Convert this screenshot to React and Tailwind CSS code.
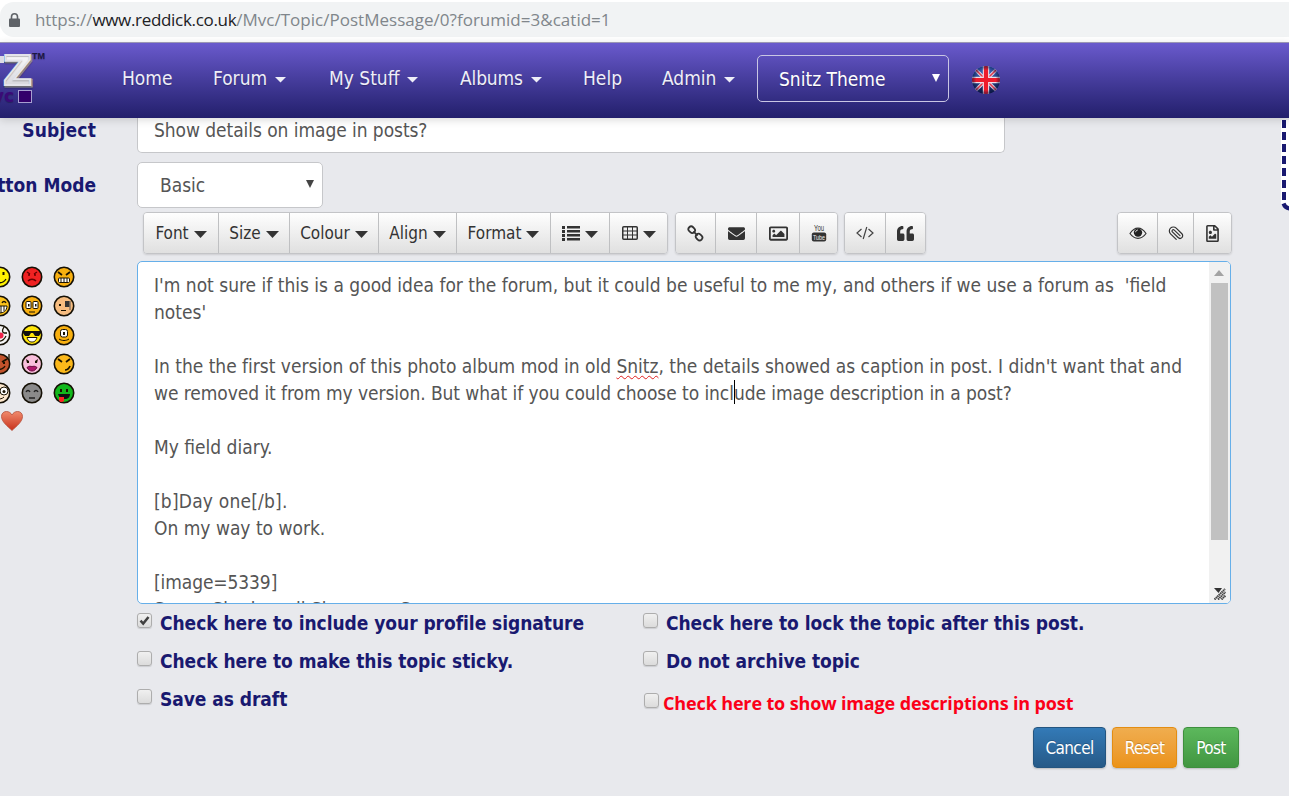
import React from "react";
import { FaEnvelope, FaQuoteLeft, FaRegFileImage, FaRegImage } from "react-icons/fa";
import { Paperclip } from "lucide-react";

function Caret({ className = "" }) {
  return (
    <svg className={className} width="13" height="7" viewBox="0 0 13 7">
      <path d="M0 0h13L6.500 7z" fill="currentColor" />
    </svg>
  );
}

function Logo() {
  return (
    <svg className="shrink-0" width="48" height="64" viewBox="0 0 48 64">
      <defs>
        <linearGradient id="silver" x1="0" y1="0" x2="0" y2="1">
          <stop offset="0" stopColor="#ffffff" />
          <stop offset="1" stopColor="#cfcfd6" />
        </linearGradient>
      </defs>
      <text x="33" y="39" textAnchor="end" fontFamily="DejaVu Sans" fontWeight="700" fontSize="40" fill="#8d8d96" stroke="#8d8d96" strokeWidth="3">Z</text>
      <text x="32" y="38" textAnchor="end" fontFamily="DejaVu Sans" fontWeight="700" fontSize="40" fill="url(#silver)" stroke="#e4e4ea" strokeWidth="2">Z</text>
      <path d="M0 9h4v7H0z" fill="#dcdce4" />
      <text x="32" y="12" fontFamily="Liberation Sans" fontWeight="700" fontSize="9" fill="#1c1740">TM</text>
      <text x="14" y="55" textAnchor="end" fontFamily="DejaVu Sans" fontWeight="700" fontSize="17" fill="#3a0a78">vc</text>
      <rect x="18.500" y="43.500" width="13" height="12" fill="#33006b" stroke="#a79fd0" />
    </svg>
  );
}

function Flag() {
  return (
    <svg width="30" height="30" viewBox="0 0 30 30">
      <defs>
        <clipPath id="disc"><circle cx="15" cy="15" r="14" /></clipPath>
        <linearGradient id="sea" x1="0" y1="0" x2="0" y2="1">
          <stop offset="0" stopColor="#3f74cf" />
          <stop offset="1" stopColor="#0a1440" />
        </linearGradient>
        <radialGradient id="shade">
          <stop offset="0.7" stopColor="#0a1440" stopOpacity="0" />
          <stop offset="1" stopColor="#0a1440" stopOpacity="0.6" />
        </radialGradient>
      </defs>
      <g clipPath="url(#disc)">
        <rect width="30" height="30" fill="url(#sea)" />
        <path d="M3 3l24 24M27 3L3 27" stroke="#dccfe2" strokeWidth="3.600" />
        <path d="M3 3l24 24M27 3L3 27" stroke="#e0384a" strokeWidth="1.500" />
        <path d="M15 0v30M0 15h30" stroke="#f0dfe8" strokeWidth="6.400" />
        <path d="M15 0v30M0 15h30" stroke="#ee1c2c" strokeWidth="4.200" />
        <circle cx="15" cy="15" r="14" fill="url(#shade)" />
      </g>
    </svg>
  );
}

function NavItem({ label, caret, className }) {
  return (
    <div className={"flex shrink-0 items-center gap-[8px] " + className}>
      <span>{label}</span>
      {caret && (
        <svg className="mt-[3px]" width="11" height="6" viewBox="0 0 11 6">
          <path d="M0 0h11L5.500 5.500z" fill="#eeeef8" />
        </svg>
      )}
    </div>
  );
}

function Tool({ label, drop, className, children }) {
  return (
    <div
      className={
        "flex h-full items-center justify-center border-r border-[#bfc0c2] bg-linear-to-b from-[#fefefe] to-[#e0e0e0] text-[#333] last:border-r-0 " +
        className
      }
    >
      {label && <span>{label}</span>}
      {children}
      {drop && <Caret className="ml-[5px] mt-[3px]" />}
    </div>
  );
}

function Group({ className, children }) {
  return (
    <div className={"flex h-[42px] overflow-hidden rounded-[4px] border border-[#c3c4c7] shadow-[0_1px_2px_rgba(0,0,0,0.12)] " + className}>
      {children}
    </div>
  );
}

function ListIcon() {
  return (
    <svg width="18" height="15" viewBox="0 0 18 15" fill="#333">
      <path d="M0 0h3v3H0zM0 4h3v3H0zM0 8h3v3H0zM0 12h3v3H0zM5 0h13v2.500H5zM5 4h13v2.500H5zM5 8h13v2.500H5zM5 12h13v2.500H5z" />
    </svg>
  );
}

function TableIcon() {
  return (
    <svg width="16" height="14" viewBox="0 0 16 14" fill="none" stroke="#333">
      <rect x="0.750" y="0.750" width="14.500" height="12.500" rx="1" strokeWidth="1.500" />
      <path d="M0 5h16M0 9h16M5.500 0v14M10.500 0v14" />
    </svg>
  );
}

function ChainIcon() {
  return (
    <svg width="17" height="17" viewBox="0 0 18 18" fill="none" stroke="#333" strokeWidth="1.900">
      <rect x="-3.700" y="-2.900" width="7.400" height="5.800" rx="2.900" transform="translate(5 5) rotate(45)" />
      <rect x="-3.700" y="-2.900" width="7.400" height="5.800" rx="2.900" transform="translate(12.800 12.800) rotate(45)" />
      <path d="M6.800 6.800l4.400 4.400" />
    </svg>
  );
}

function YouTubeIcon() {
  return (
    <svg width="16" height="18" viewBox="0 0 16 18">
      <text x="8" y="7.300" textAnchor="middle" fontFamily="Liberation Sans" fontSize="9" textLength="10" lengthAdjust="spacingAndGlyphs" fill="#333">You</text>
      <rect x="0.800" y="8.500" width="14.400" height="9" rx="2" fill="#333" />
      <text x="8" y="15.800" textAnchor="middle" fontFamily="Liberation Sans" fontSize="8" textLength="12" lengthAdjust="spacingAndGlyphs" fill="#f4f4f4">Tube</text>
    </svg>
  );
}

function CodeIcon() {
  return (
    <svg width="18" height="14" viewBox="0 0 18 14" fill="none" stroke="#444" strokeWidth="1.200">
      <path d="M5.500 3L1 7l4.500 4M12.500 3L17 7l-4.500 4M10.800 1L7.200 13" />
    </svg>
  );
}

function EyeIcon() {
  return (
    <svg width="18" height="13" viewBox="0 0 18 13">
      <path d="M1 6.500C3.500 2.700 6 1.200 9 1.200s5.500 1.500 8 5.300c-2.500 3.500-5 4.900-8 4.900S3.500 10 1 6.500z" fill="none" stroke="#333" strokeWidth="1.200" />
      <circle cx="9" cy="5.600" r="4.200" fill="#222" />
      <path d="M6.600 5.200c.2-1.300 1-2 2.200-2.200" fill="none" stroke="#eee" strokeWidth="1" />
    </svg>
  );
}

const dark = "#1a1200";
const eyes = <path d="M7 7h2v3H7zM13 7h2v3h-2z" fill={dark} />;
const angry = <path d="M5 6l4 3M17 6l-4 3" stroke={dark} strokeWidth="1.800" fill="none" />;
const smileys = [
  { fill: "#fff200", art: <><path d="M13.500 6h2v3h-2z" fill={dark} /><path d="M5 13c3 5 9 5 12 0" stroke={dark} strokeWidth="1.300" fill="none" /></> },
  { fill: "#f02222", art: <path d="M6 6l3 2M16 6l-3 2M9 9H7M13 9h2M7 15c2-2.500 6-2.500 8 0" stroke="#6a0000" strokeWidth="1.500" fill="none" /> },
  { fill: "#f8b010", art: <>{angry}<rect x="5.500" y="12" width="11" height="4.500" rx="1" fill="#fff" stroke={dark} /><path d="M8 12v5M11 12v5M14 12v5" stroke={dark} /></> },
  { fill: "#fbc21a", art: <><path d="M13 8c1-2 3-2 4 0" stroke={dark} fill="none" strokeWidth="1.300" /><path d="M3 11h15c0 5-4 7-7.500 7z" fill="#fff" stroke={dark} /><path d="M12 11v7M15 11v5" stroke={dark} /></> },
  { fill: "#f8b010", art: <><rect x="5" y="6.500" width="5" height="7" rx="1" fill="#fff" stroke={dark} /><rect x="12" y="6.500" width="5" height="7" rx="1" fill="#fff" stroke={dark} /><path d="M7 9h1.500v2.500H7zM14 9h1.500v2.500H14z" fill={dark} /><path d="M8 17h6" stroke={dark} /></> },
  { fill: "#f6bc80", art: <><path d="M6 9h2v2H6z" fill={dark} /><rect x="12" y="6" width="4.500" height="6" fill="#333" /><path d="M17 6v9" stroke="#555" /><path d="M8 15.500h5" stroke={dark} /></> },
  { fill: "#f4f4f4", art: <><path d="M15 3c-2 3-2 5 0 6h3" stroke={dark} fill="none" strokeWidth="1.300" /><circle cx="11.500" cy="11.500" r="3" fill="#ee2148" /><path d="M8 17c4 1 7-1 9-5" stroke={dark} fill="none" strokeWidth="1.300" /></> },
  { fill: "#ffe60a", art: <><path d="M2 7h18v2l-2 3h-4l-2-3h-2l-2 3H4L2 9z" fill="#111" /><path d="M6 13.500h10c-1 3.500-3 4.500-5 4.500s-4-1-5-4.500z" fill="#fff" stroke={dark} /></> },
  { fill: "#f8b010", art: <><rect x="7.500" y="5.500" width="7" height="7.500" rx="2" fill="#fff" stroke={dark} /><path d="M10 8h2v3h-2z" fill={dark} /><path d="M6 15c3 2 7 2 10 0" stroke={dark} fill="none" /></> },
  { fill: "#c2532c", art: <><path d="M13 9l5-3M14 10h2" stroke={dark} strokeWidth="1.800" /><path d="M9 16c3 1 6-1 7-3M20 1v6" stroke={dark} fill="none" strokeWidth="1.300" /></> },
  { fill: "#f9bfdc", art: <><path d="M5 6l3 2v2H6zM17 6l-3 2v2h2z" fill={dark} /><path d="M6 14.500c2-2 4-1 5-1s3-1 5 1c-1.500 2.500-3 3.500-5 3.500s-3.500-1-5-3.500z" fill="#b0186c" stroke="#6b0b40" /></> },
  { fill: "#fbb81a", art: <>{angry}<path d="M12 17c3 0 4-1.500 5-4" stroke={dark} fill="none" strokeWidth="1.700" /></> },
  { fill: "#fbe6cc", art: <><circle cx="15" cy="9" r="4" fill="#fff" stroke={dark} /><circle cx="15" cy="9.500" r="1.500" fill={dark} /><path d="M8 17c3 0 5 0 7-2" stroke={dark} fill="none" /></> },
  { fill: "#8a8a8a", art: <path d="M5 10c1-2 3-2 4 0M13 10c1-2 3-2 4 0M8 16h6" stroke="#222" fill="none" strokeWidth="1.300" /> },
  { fill: "#12b81c", art: <>{eyes}<path d="M5 12h12c0 3-2 5-5 5s-6-1-7-5z" fill="#111" /><path d="M6 15h5v4c-2 2-5 1-5-1z" fill="#f22" /></> },
];

function Smiley({ fill, art }) {
  return (
    <svg width="22" height="22" viewBox="0 0 22 22">
      <circle cx="11" cy="11" r="9.700" fill={fill} stroke="#151005" strokeWidth="1.600" />
      {art}
    </svg>
  );
}

function Check({ label, on, className = "", labelClass }) {
  return (
    <div className={"flex h-[38px] items-start " + className}>
      <span className="flex size-[15px] shrink-0 items-center justify-center rounded-[3px] border border-[#adadad] bg-linear-to-b from-[#f0f0f0] to-[#dcdcdc] shadow-[0_1px_1px_rgba(0,0,0,0.12)]">
        {on && (
          <svg width="11" height="11" viewBox="0 0 11 11">
            <path d="M1.500 5.700l2.700 2.800L9.500 2" fill="none" stroke="#404040" strokeWidth="2.500" />
          </svg>
        )}
      </span>
      <span className={"whitespace-nowrap " + labelClass}>{label}</span>
    </div>
  );
}

const navyLabel = "ml-[8px] mt-[-3px] text-[19px] leading-[27px] font-bold tracking-[-0.05px] text-[#191970]";

export default function App() {
  return (
    <div className="h-[796px] w-[1289px] overflow-hidden bg-[#e8e9ed] font-['DejaVu_Sans_Condensed','DejaVu_Sans',sans-serif] text-[19px] leading-[27px] text-[#555]">
      <div className="h-[42px] bg-white pt-[2px]">
        <div className="flex h-[35px] items-center rounded-l-[14px] bg-[#f1f3f4] pl-[9px] font-['Open_Sans','Noto_Sans',sans-serif] text-[17px] text-[#80868b]">
          <svg className="mr-[15px]" width="11" height="14" viewBox="0 0 11 14">
            <path d="M2.500 6V3.800a3 3 0 016 0V6" fill="none" stroke="#5f6368" strokeWidth="1.600" />
            <rect x="0" y="5.500" width="11" height="8.500" rx="1" fill="#5f6368" />
          </svg>
          <span className="tracking-[-0.075px]">
            https://<span className="tracking-[-0.32px] text-[#202124]">www.reddick.co.uk</span>/<span className="tracking-[0.02px]">Mvc/Topic/PostMessage/0?forumid=3&amp;catid=1</span>
          </span>
        </div>
      </div>

      <nav className="relative flex h-[76px] border-t border-[#9a96b4] bg-linear-to-b from-[#6a5acd] to-[#231f6c] text-[#eeeef8] shadow-[0_2px_8px_rgba(0,0,0,0.15)] [text-shadow:0_1px_1px_rgba(0,0,0,0.25)]">
        <div className="w-[122px] shrink-0 pt-[4px]"><Logo /></div>
        <div className="flex h-[71px] items-center">
          <NavItem label="Home" className="w-[91px]" />
          <NavItem label="Forum" caret className="w-[116px]" />
          <NavItem label="My Stuff" caret className="w-[131px]" />
          <NavItem label="Albums" caret className="w-[123px] tracking-[-0.15px]" />
          <NavItem label="Help" className="w-[79px]" />
          <NavItem label="Admin" caret className="w-[95px]" />
        </div>
        <div className="mt-[12px] flex h-[47px] w-[192px] shrink-0 items-center justify-between rounded-[5px] border border-[#c9c6e4] pr-[8px] pl-[21px] text-white">
          <span className="mt-[2px]">Snitz Theme</span>
          <svg className="mb-[2px]" width="8" height="8" viewBox="0 0 9 9"><path d="M0 0h9L4.500 9z" fill="#fff" /></svg>
        </div>
        <div className="mt-[22px] ml-[22px]"><Flag /></div>
      </nav>

      <div className="flex h-[678px]">
        <aside className="flex w-[96px] shrink-0 flex-col">
          <div className="mt-[-1px] flex justify-end font-bold tracking-[0.2px] whitespace-nowrap text-[#191970]">Subject</div>
          <div className="mt-[28px] flex justify-end font-bold whitespace-nowrap text-[#191970]">Button Mode</div>
          <div className="mt-[67px] ml-[-11px] grid w-[86px] grid-cols-3 gap-x-[10px] gap-y-[7px]">
            {smileys.map((s, i) => <Smiley key={i} {...s} />)}
          </div>
          <svg className="mt-[6px]" width="24" height="22" viewBox="0 0 24 22">
            <defs>
              <linearGradient id="heart" x1="0" y1="0" x2="0" y2="1">
                <stop offset="0" stopColor="#f08a6c" />
                <stop offset="1" stopColor="#c8311c" />
              </linearGradient>
            </defs>
            <path d="M12 20.500C8 16.500 1.500 12 1.500 6.500 1.500 3 4 1.500 6.500 1.500S11 3 12 5c1-2 3-3.500 5.500-3.500s5 1.500 5 5c0 5.500-6.500 10-10.500 14z" fill="url(#heart)" stroke="#b5503c" strokeWidth="0.800" />
          </svg>
        </aside>

        <main className="ml-[41px] flex w-[1102px] shrink-0 flex-col">
          <div className="h-[35px] w-[868px] rounded-b-[5px] border border-t-0 border-[#c6c7ca] bg-white pl-[16px]">
            <div className="mt-[-1px] tracking-[-0.06px]">Show details on image in posts?</div>
          </div>
          <div className="mt-[9px] flex h-[46px] w-[186px] items-center justify-between rounded-[5px] border border-[#c6c7ca] bg-white pr-[8px] pl-[22px]">
            <span>Basic</span>
            <svg className="mb-[2px]" width="8" height="8" viewBox="0 0 9 9"><path d="M0 0h9L4.500 9z" fill="#444" /></svg>
          </div>

          <div className="mt-[4px] flex pl-[6px] text-[17px]">
            <Group className="w-[525px]">
              <Tool label="Font" drop className="w-[75px]" />
              <Tool label="Size" drop className="w-[71px]" />
              <Tool label="Colour" drop className="w-[89px]" />
              <Tool label="Align" drop className="w-[78px]" />
              <Tool label="Format" drop className="w-[94px]" />
              <Tool drop className="w-[59px]"><ListIcon /></Tool>
              <Tool drop className="w-[57px]"><TableIcon /></Tool>
            </Group>
            <Group className="ml-[7px] w-[163px]">
              <Tool className="w-[40px]"><ChainIcon /></Tool>
              <Tool className="w-[41px]"><FaEnvelope size={17} /></Tool>
              <Tool className="w-[43px]"><FaRegImage size={19} /></Tool>
              <Tool className="w-[37px]"><YouTubeIcon /></Tool>
            </Group>
            <Group className="ml-[6px] w-[82px]">
              <Tool className="w-[41px]"><CodeIcon /></Tool>
              <Tool className="w-[39px]"><FaQuoteLeft size={17} /></Tool>
            </Group>
            <Group className="ml-[191px] w-[115px]">
              <Tool className="w-[40px]"><EyeIcon /></Tool>
              <Tool className="w-[36px]"><Paperclip className="rotate-90" size={16} strokeWidth={1.8} /></Tool>
              <Tool className="w-[37px]"><FaRegFileImage size={17} /></Tool>
            </Group>
          </div>

          <div className="mt-[7px] flex h-[343px] w-[1094px] overflow-hidden rounded-[5px] border border-[#66afe9] bg-white">
            <div className="h-[341px] w-[1071px] overflow-hidden pt-[10px] pl-[16px] whitespace-pre">
              <div>I'm not sure if this is a good idea for the forum, but it could be useful to me my, and others if we use a forum as  'field</div>
              <div>notes'</div>
              <div className="h-[27px]" />
              <div className="tracking-[-0.015px]">In the the first version of this photo album mod in old <span className="underline decoration-[#e02020] decoration-wavy decoration-1 underline-offset-[2px]">Snitz</span>, the details showed as caption in post. I didn't want that and</div>
              <div className="flex tracking-[-0.06px]">
                <span>we removed it from my version. But what if you could choose to incl</span>
                <span className="mr-[-1px] h-[24px] w-px bg-black" />
                <span>ude image description in a post?</span>
              </div>
              <div className="h-[27px]" />
              <div>My field diary.</div>
              <div className="h-[27px]" />
              <div className="tracking-[0.2px]">[b]Day one[/b].</div>
              <div>On my way to work.</div>
              <div className="h-[27px]" />
              <div className="tracking-[-0.1px]">[image=5339]</div>
              <div>Seven Shades, all Shown on Sea</div>
            </div>
            <div className="flex w-[21px] flex-col items-center bg-[#f1f1f1] pr-[1px]">
              <svg className="mt-[8px]" width="10" height="6" viewBox="0 0 10 6"><path d="M0 6l5-6 5 6z" fill="#a3a3a3" /></svg>
              <div className="mt-[7px] h-[257px] w-[17px] bg-[#c1c1c1]" />
              <svg className="mt-[48px] ml-[2px]" width="12" height="12" viewBox="0 0 12 12">
                <path d="M0 0h8L4.500 5z" fill="#333" />
                <path d="M0.500 11.500L11 1M4 11.500L11.500 4M7.500 11.500l4-4" stroke="#444" strokeWidth="2" strokeDasharray="1.500 0.500" />
              </svg>
            </div>
          </div>

          <div className="mt-[9px] flex h-[114px]">
            <div className="w-[506px]">
              <Check on label="Check here to include your profile signature" labelClass={navyLabel} />
              <Check label="Check here to make this topic sticky." labelClass={navyLabel} />
              <Check label="Save as draft" labelClass={navyLabel} />
            </div>
            <div>
              <Check label="Check here to lock the topic after this post." labelClass={navyLabel} />
              <Check label="Do not archive topic" labelClass={navyLabel} />
              <Check
                label="Check here to show image descriptions in post"
                className="pt-[4px] pl-px"
                labelClass="ml-[4px] mt-[-3px] font-['Open_Sans','Noto_Sans',sans-serif] text-[18px] leading-[27px] font-bold tracking-[-0.14px] text-[#fb0018]"
              />
            </div>
          </div>

          <div className="flex justify-end gap-[6px] text-[17px] tracking-[-0.6px] text-white [text-shadow:0_-1px_0_rgba(0,0,0,0.2)]">
            <div className="flex h-[41px] w-[73px] items-center justify-center rounded-[4px] border border-[#245580] bg-linear-to-b from-[#337ab7] to-[#265a88] pt-[2px] shadow-[0_1px_2px_rgba(0,0,0,0.2)]">Cancel</div>
            <div className="flex h-[41px] w-[65px] items-center justify-center rounded-[4px] border border-[#e38d13] bg-linear-to-b from-[#f0ad4e] to-[#eb9316] pt-[2px] shadow-[0_1px_2px_rgba(0,0,0,0.2)]">Reset</div>
            <div className="flex h-[41px] w-[56px] items-center justify-center rounded-[4px] border border-[#3e8f3e] bg-linear-to-b from-[#5cb85c] to-[#419641] pt-[2px] shadow-[0_1px_2px_rgba(0,0,0,0.2)]">Post</div>
          </div>
        </main>

        <svg className="ml-[42px] shrink-0" width="8" height="94" viewBox="0 0 8 94">
          <path d="M0 2h8v89C4 91 0 88 0 84z" fill="#fff" />
          <path d="M3 2v80" stroke="#191970" strokeWidth="4" strokeDasharray="8 4" />
          <path d="M2.500 85.500c1 3 3 4.500 6 5" fill="none" stroke="#191970" strokeWidth="4" />
        </svg>
      </div>
    </div>
  );
}
